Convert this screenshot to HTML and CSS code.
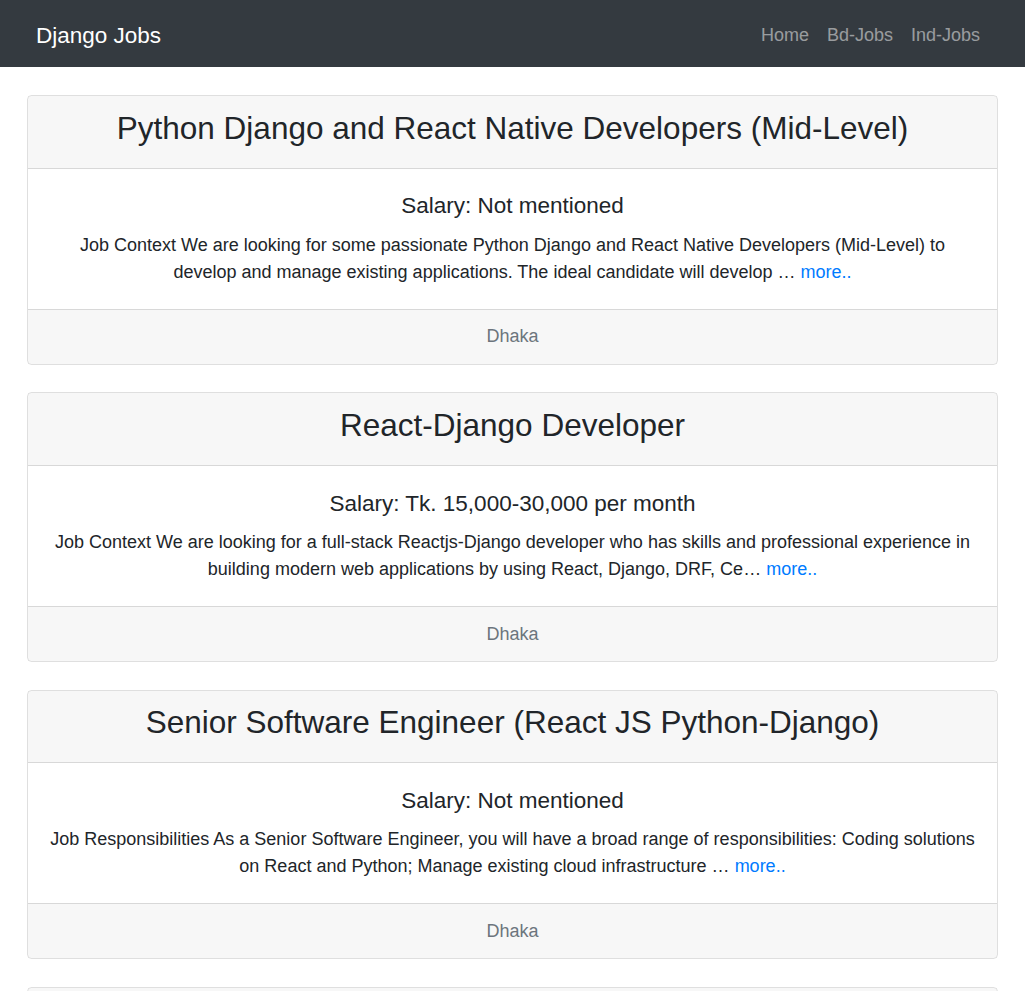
FILE: index.html
```html
<!DOCTYPE html>
<html lang="en">
<head>
<meta charset="utf-8">
<title>Django Jobs</title>
<link rel="stylesheet" href="styles.css">
</head>
<body>
<nav class="navbar">
  <a class="brand" href="#">Django Jobs</a>
  <ul class="nav">
    <li><a class="nav-link" href="#">Home</a></li>
    <li><a class="nav-link" href="#">Bd-Jobs</a></li>
    <li><a class="nav-link" href="#">Ind-Jobs</a></li>
  </ul>
</nav>
<main class="jobs">
  <article class="card">
    <header class="card-header"><h3 class="card-title">Python Django and React Native Developers (Mid-Level)</h3></header>
    <div class="card-body">
      <h5 class="salary">Salary: Not mentioned</h5>
      <p class="card-text">Job Context We are looking for some passionate Python Django and React Native Developers (Mid-Level) to develop and manage existing applications. The ideal candidate will develop … <a href="#" class="more">more..</a></p>
    </div>
    <footer class="card-footer">Dhaka</footer>
  </article>
  <article class="card">
    <header class="card-header"><h3 class="card-title">React-Django Developer</h3></header>
    <div class="card-body">
      <h5 class="salary">Salary: Tk. 15,000-30,000 per month</h5>
      <p class="card-text">Job Context We are looking for a full-stack Reactjs-Django developer who has skills and professional experience in building modern web applications by using React, Django, DRF, Ce… <a href="#" class="more">more..</a></p>
    </div>
    <footer class="card-footer">Dhaka</footer>
  </article>
  <article class="card">
    <header class="card-header"><h3 class="card-title">Senior Software Engineer (React JS Python-Django)</h3></header>
    <div class="card-body">
      <h5 class="salary">Salary: Not mentioned</h5>
      <p class="card-text">Job Responsibilities As a Senior Software Engineer, you will have a broad range of responsibilities: Coding solutions on React and Python; Manage existing cloud infrastructure … <a href="#" class="more">more..</a></p>
    </div>
    <footer class="card-footer">Dhaka</footer>
  </article>
  <article class="card">
    <header class="card-header"><h3 class="card-title">Python Django Developer</h3></header>
    <div class="card-body">
      <h5 class="salary">Salary: Negotiable</h5>
      <p class="card-text">Job Context We are looking for a Python Django Developer … <a href="#" class="more">more..</a></p>
    </div>
    <footer class="card-footer">Dhaka</footer>
  </article>
</main>
</body>
</html>
```
FILE: styles.css
```css
html {
  font-size: 18px;
}
body {
  margin: 0;
  font-family: "Liberation Sans", Arial, sans-serif;
  font-size: 18px;
  line-height: 1.5;
  color: #212529;
  background: #fff;
}
.navbar {
  display: flex;
  align-items: center;
  justify-content: space-between;
  height: 67px;
  padding: 4px 36px 0;
  background: #343a40;
  box-sizing: border-box;
}
.brand {
  color: #fff;
  font-size: 22.5px;
  line-height: 33.75px;
  text-decoration: none;
}
.nav {
  display: flex;
  list-style: none;
  margin: 0;
  padding: 0;
}
.nav-link {
  display: block;
  padding: 0 9px;
  color: rgba(255, 255, 255, 0.5);
  text-decoration: none;
  line-height: 27px;
}
.jobs {
  padding: 28px 27px 0;
  display: flex;
  flex-direction: column;
  gap: 27.5px;
}
.card {
  border: 1px solid rgba(0, 0, 0, 0.125);
  border-radius: 4.5px;
  text-align: center;
  overflow: hidden;
}
.card-header {
  padding: 13.5px 22.5px;
  background: rgba(0, 0, 0, 0.03);
  border-bottom: 1px solid rgba(0, 0, 0, 0.125);
}
.card-title {
  margin: 0 0 7px;
  font-size: 31.5px;
  font-weight: 400;
  line-height: 1.2;
}
.card-body {
  padding: 23.5px 21.5px 23px;
}
.salary {
  margin: 0 0 12.5px;
  font-size: 22.5px;
  font-weight: 400;
  line-height: 27px;
}
.card-text {
  margin: 0;
  line-height: 27px;
}
.more {
  color: #007bff;
  text-decoration: none;
}
.card-footer {
  padding: 13.5px 22.5px;
  background: rgba(0, 0, 0, 0.03);
  border-top: 1px solid rgba(0, 0, 0, 0.125);
  color: #6c757d;
  line-height: 27px;
}
```
